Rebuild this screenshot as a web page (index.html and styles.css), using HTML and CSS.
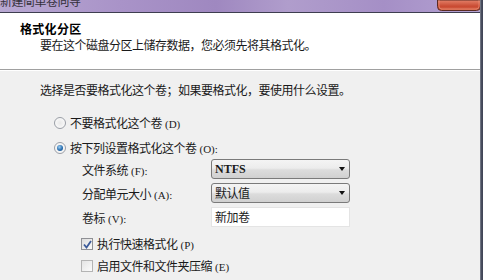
FILE: index.html
```html
<!DOCTYPE html>
<html lang="zh-CN">
<head>
<meta charset="utf-8">
<title>新建简单卷向导</title>
<link rel="stylesheet" href="styles.css">
</head>
<body>
<div class="frame">
<div class="window">
  <div class="titlebar">
    <span class="title-text">新建简单卷向导</span>
    <svg class="close-btn" width="44" height="11" viewBox="0 0 44 11">
      <defs>
        <linearGradient id="cg" x1="0" y1="0" x2="0" y2="1">
          <stop offset="0" stop-color="#e4826a"/>
          <stop offset="0.6" stop-color="#c94a32"/>
          <stop offset="1" stop-color="#d9684c"/>
        </linearGradient>
      </defs>
      <path d="M0.5 0 V6.5 Q0.5 10.5 4.5 10.5 H39.5 Q43.5 10.5 43.5 6.5 V0 Z" fill="url(#cg)" stroke="#5a2a22" stroke-width="1"/>
      <path d="M2 0 V6 Q2 9 5 9 H39 Q42 9 42 6 V0" fill="none" stroke="#f2a890" stroke-width="0.8" opacity="0.6"/>
    </svg>
  </div>
  <div class="header">
    <div class="h-title">格式化分区</div>
    <div class="h-sub">要在这个磁盘分区上储存数据，您必须先将其格式化。</div>
  </div>
  <div class="content">
    <div class="intro">选择是否要格式化这个卷；如果要格式化，要使用什么设置。</div>
    <div class="radio-row r1"><span class="radio"></span><span>不要格式化这个卷<span class="lat">(D)</span></span></div>
    <div class="radio-row r2"><span class="radio checked"></span><span>按下列设置格式化这个卷<span class="lat">(O):</span></span></div>
    <div class="form">
      <span class="lbl">文件系统<span class="lat">(F):</span></span>
      <div class="combo"><span class="combo-val lat-b">NTFS</span><span class="arrow"></span></div>
      <span class="lbl">分配单元大小<span class="lat">(A):</span></span>
      <div class="combo"><span class="combo-val">默认值</span><span class="arrow"></span></div>
      <span class="lbl">卷标<span class="lat">(V):</span></span>
      <div class="textbox">新加卷</div>
    </div>
    <div class="check-row c1"><span class="check checked"><svg width="9" height="9" viewBox="0 0 9 9"><path d="M1 4.5 L3.5 7.5 L8 1" fill="none" stroke="#3b5a9a" stroke-width="1.8"/></svg></span><span>执行快速格式化<span class="lat">(P)</span></span></div>
    <div class="check-row c2"><span class="check"></span><span>启用文件和文件夹压缩<span class="lat">(E)</span></span></div>
  </div>
</div>
<div class="edge"></div>
</div>
</body>
</html>
```
FILE: styles.css
```css
html, body {
  margin: 0;
  padding: 0;
}
body {
  width: 483px;
  height: 280px;
  overflow: hidden;
  font-family: "Noto Sans CJK SC", "Noto Sans", sans-serif;
  font-size: 12px;
  letter-spacing: -0.5px;
  color: #1a1a1a;
  background: #f0f0f0;
}
.frame {
  display: flex;
  width: 483px;
  height: 280px;
}
.window {
  flex: 1;
  min-width: 0;
  display: flex;
  flex-direction: column;
  background: #f0f0f0;
}
.edge {
  flex: none;
  width: 3px;
  background: linear-gradient(90deg, #8a8e9a, #4a4f60 40%, #3e4354);
}
.titlebar {
  height: 12px;
  flex: none;
  display: flex;
  justify-content: space-between;
  align-items: flex-start;
  overflow: hidden;
  background: linear-gradient(90deg, #b8a8d2 0%, #a993c8 25%, #9f88c0 45%, #b09dcc 60%, #a58fc6 80%, #b4a2d2 100%);
  border-bottom: 1px solid #3e3e50;
}
.title-text {
  flex: none;
  font-size: 12px;
  line-height: 14px;
  margin-top: -6px;
  color: #111;
  opacity: 0.8;
}
.close-btn {
  flex: none;
  display: block;
  margin-right: -1px;
}
.header {
  height: 57px;
  flex: none;
  background: #ffffff;
  padding: 9px 0 0 20px;
  box-sizing: border-box;
  border-bottom: 1px solid #a0a0a0;
}
.h-title {
  font-weight: bold;
  font-size: 12px;
  line-height: 14px;
  letter-spacing: 0.3px;
  color: #000;
}
.h-sub {
  line-height: 14px;
  margin-top: 2px;
  padding-left: 20px;
}
.content {
  flex: 1;
  border-top: 1px solid #ffffff;
  padding: 11px 0 0 40px;
  display: flex;
  flex-direction: column;
}
.intro {
  line-height: 16px;
}
.lat {
  font-family: "Liberation Serif", serif;
  font-size: 11px;
  letter-spacing: 0;
  margin-left: 3px;
}
.lat-b {
  font-family: "Liberation Serif", serif;
  font-weight: bold;
  letter-spacing: 0;
}
.radio-row {
  display: flex;
  align-items: center;
  gap: 4px;
  height: 16px;
  line-height: 16px;
  padding-left: 14px;
}
.r1 { margin-top: 17px; }
.r2 { margin-top: 9px; }
.radio {
  width: 12px;
  height: 12px;
  box-sizing: border-box;
  border-radius: 50%;
  border: 1px solid #9a9ea6;
  background: radial-gradient(circle at 50% 50%, #e8e8e8 0%, #f8f8f8 70%);
  display: flex;
  align-items: center;
  justify-content: center;
}
.radio.checked::after {
  content: "";
  width: 6px;
  height: 6px;
  border-radius: 50%;
  background: radial-gradient(circle at 40% 35%, #9fd0f2 0%, #2a6fb0 55%, #1a4f8a 100%);
}
.form {
  display: grid;
  grid-template-columns: 129px 139px;
  grid-auto-rows: 20px;
  row-gap: 4px;
  margin-top: 3px;
  padding-left: 42px;
  align-items: center;
}
.lbl {
  line-height: 16px;
  margin-top: 2px;
}
.combo {
  height: 20px;
  box-sizing: border-box;
  border: 1px solid #7a7a7a;
  border-radius: 3px;
  background: linear-gradient(#f4f4f4 0%, #ececec 45%, #dcdcdc 55%, #d0d0d0 100%);
  display: flex;
  align-items: center;
  justify-content: space-between;
  padding: 0 4px 0 3px;
}
.combo-val {
  line-height: 18px;
}
.arrow {
  width: 0;
  height: 0;
  border-left: 3.5px solid transparent;
  border-right: 3.5px solid transparent;
  border-top: 4px solid #111;
}
.textbox {
  height: 20px;
  box-sizing: border-box;
  background: #ffffff;
  border: 1px solid #e4e4e4;
  padding-left: 3px;
  line-height: 18px;
}
.check-row {
  display: flex;
  align-items: center;
  gap: 4px;
  height: 18px;
  line-height: 18px;
  padding-left: 41px;
}
.c1 { margin-top: 8px; }
.c2 { margin-top: 4px; }
.check {
  width: 12px;
  height: 12px;
  box-sizing: border-box;
  border: 1px solid #8f9095;
  background: linear-gradient(135deg, #dcdcdc, #fafafa);
  display: flex;
  align-items: center;
  justify-content: center;
}
.c2 .check {
  border-color: #b4b4b4;
  background: linear-gradient(135deg, #e4e4e4, #fbfbfb);
}
```
